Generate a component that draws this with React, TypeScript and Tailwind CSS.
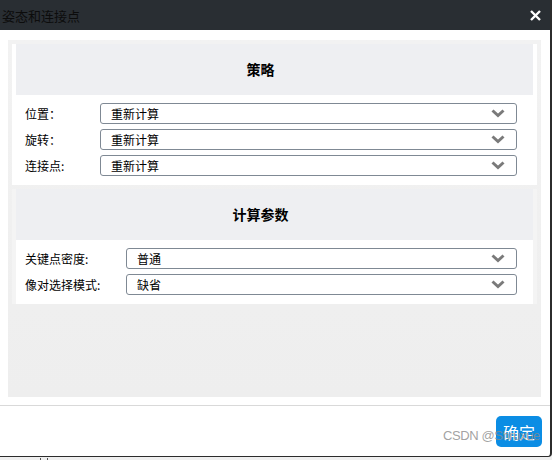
import React from 'react';

const FONT = { fontFamily: '"Noto Sans CJK SC", "Noto Sans", "Liberation Sans", sans-serif' };

const POSE_ROWS = [
  { label: '位置：', value: '重新计算' },
  { label: '旋转：', value: '重新计算' },
  { label: '连接点:', value: '重新计算' },
];

const PARAM_ROWS = [
  { label: '关键点密度:', value: '普通' },
  { label: '像对选择模式:', value: '缺省' },
];

function Chevron() {
  return (
    <svg width="14" height="9" viewBox="0 0 14 9" className="shrink-0">
      <polyline points="1.5,1.5 7,6.5 12.5,1.5" fill="none" stroke="#7a7a7a" strokeWidth="3" />
    </svg>
  );
}

function SelectRow({ label, value, labelWidth }: { label: string; value: string; labelWidth: string }) {
  return (
    <div className="flex items-center h-[21px] pl-[9px] pr-[16px]">
      <span className={`${labelWidth} shrink-0 text-[12px] text-black leading-none`}>{label}</span>
      <div className="flex-1 h-[21px] flex items-center justify-between border border-[#7f8994] rounded-[3px] bg-white pl-[10px] pr-[11px]">
        <span className="text-[12px] text-black leading-none">{value}</span>
        <Chevron />
      </div>
    </div>
  );
}

function SectionHeader({ title }: { title: string }) {
  return (
    <div className="h-[51px] bg-[#eeeff2] flex items-center justify-center pr-[28px]">
      <span className="text-[14px] font-bold text-black">{title}</span>
    </div>
  );
}

export default function App() {
  return (
    <div className="w-[552px] h-[460px] bg-[#efefef] relative overflow-hidden" style={FONT}>
      <div className="w-[552px] h-[457px] bg-white border-r-2 border-b border-[#2c2c2c] rounded-br-[4px] flex flex-col">
        {/* Title bar */}
        <div className="h-[30px] bg-[#292e33] flex items-center justify-between pl-[2px] pr-[9px] shrink-0">
          <span className="text-[13px] text-[#0c0c0c] leading-none">姿态和连接点</span>
          <svg width="11" height="11" viewBox="0 0 11 11">
            <path d="M1 1 L10 10 M10 1 L1 10" stroke="#ffffff" strokeWidth="2.4" />
          </svg>
        </div>

        {/* Body */}
        <div className="pt-[10px] pl-[8px] pr-[9px]">
          <div className="h-[357px] bg-gradient-to-b from-[#f2f2f2] to-[#eeeeee] p-[4px] flex flex-col">
            {/* Strategy */}
            <div className="bg-white px-[4px] pb-[9px]">
              <SectionHeader title="策略" />
              <div className="pt-[8px] flex flex-col gap-[5px]">
                {POSE_ROWS.map((row) => (
                  <SelectRow key={row.label} label={row.label} value={row.value} labelWidth="w-[75px]" />
                ))}
              </div>
            </div>

            {/* Parameters */}
            <div className="mt-[4px] px-[4px] bg-[#f4f4f4]">
              <SectionHeader title="计算参数" />
              <div className="bg-white pt-[8px] pb-[9px] flex flex-col gap-[5px]">
                {PARAM_ROWS.map((row) => (
                  <SelectRow key={row.label} label={row.label} value={row.value} labelWidth="w-[101px]" />
                ))}
              </div>
            </div>
          </div>
        </div>

        {/* Footer */}
        <div className="mt-[8px] border-t border-[#d9d9d9] flex-1 flex justify-end items-start pt-[10px] pr-[8px]">
          <button
            type="button"
            className="w-[46px] h-[31px] rounded-[5px] bg-[#0b8de4] text-white text-[16px] leading-none flex items-center justify-center"
          >
            确定
          </button>
        </div>
      </div>

      {/* watermark */}
      <span
        className="absolute left-[443px] top-[429px] text-[13px] tracking-[-0.4px] text-[#8a8a8a]/80 leading-none"
        style={{ fontFamily: '"Liberation Sans", Arial, sans-serif' }}
      >
        CSDN @Shruxue
      </span>

      {/* background window edges below */}
      <div className="absolute left-[40px] top-[458px] w-px h-[2px] bg-[#555]" />
      <div className="absolute left-[47px] top-[458px] w-px h-[2px] bg-[#555]" />
    </div>
  );
}
